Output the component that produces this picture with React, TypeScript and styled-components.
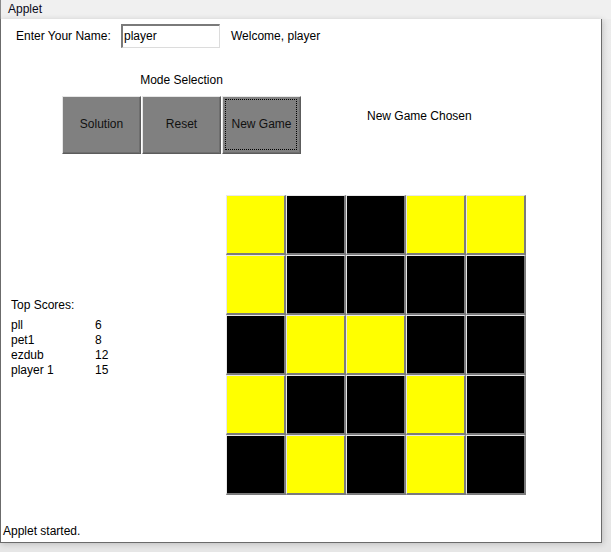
import React from "react";
import styled, { createGlobalStyle } from "styled-components";

const GlobalStyle = createGlobalStyle`
  html, body {
    margin: 0;
    padding: 0;
    background: #e9e9e9;
  }
  body {
    font-family: "Liberation Sans", Arial, sans-serif;
    font-size: 12px;
    color: #000;
  }
  * { box-sizing: border-box; }
`;

const Screen = styled.div`
  width: 611px;
  height: 552px;
  display: flex;
  flex-direction: column;
  overflow: hidden;
  background: linear-gradient(180deg, #ececec 0%, #e6e6e6 100%);
`;

const TitleBar = styled.div`
  height: 19px;
  flex: none;
  background: #f0f0f0;
  padding-left: 7px;
  line-height: 19px;
  font-size: 12px;
  color: #0a0a1a;
  border-left: 1px solid #8a8a8a;
`;

const Frame = styled.div`
  width: 602px;
  height: 524px;
  flex: none;
  background: #ffffff;
  border: 1px solid #6b6b6b;
  border-top: none;
  box-shadow: 1px 1px 6px rgba(0, 0, 0, 0.18);
  display: flex;
  flex-direction: column;
`;

const NameRow = styled.div`
  display: flex;
  align-items: center;
  padding: 5px 0 0 15px;
  height: 29px;
`;

const Label = styled.span<{ $w?: number }>`
  display: inline-block;
  width: ${(p) => (p.$w ? `${p.$w}px` : "auto")};
  line-height: 16px;
  white-space: nowrap;
`;

const TextField = styled.div`
  width: 99px;
  height: 24px;
  border-top: 2px solid #7a7a7a;
  border-left: 2px solid #7a7a7a;
  border-right: 1px solid #dcdcdc;
  border-bottom: 1px solid #dcdcdc;
  padding-left: 1px;
  line-height: 20px;
  margin-right: 11px;
  background: #fff;
`;

const ModeRow = styled.div`
  display: flex;
  align-items: flex-start;
  margin-top: 24px;
  padding-left: 61px;
`;

const ModeGroup = styled.div`
  display: flex;
  flex-direction: column;
  align-items: center;
  gap: 8px;
  width: 239px;
`;

const GroupTitle = styled.div`
  line-height: 16px;
  text-align: center;
`;

const ButtonRow = styled.div`
  display: flex;
  gap: 1px;
`;

const ModeButton = styled.button<{ $focused?: boolean }>`
  position: relative;
  width: 79px;
  height: 58px;
  margin: 0;
  padding: 0 0 3px 0;
  background: #808080;
  border-style: solid;
  border-width: 1px;
  border-color: #e6e6e6 #5c5c5c #5c5c5c #e6e6e6;
  box-shadow: inset -1px -1px 0 #6e6e6e;
  font-family: "Liberation Sans", Arial, sans-serif;
  font-size: 12px;
  color: #111;
  cursor: default;
  &::after {
    content: "";
    display: ${(p) => (p.$focused ? "block" : "none")};
    position: absolute;
    inset: 2px 3px 3px 2px;
    border: 1px dotted #000;
  }
`;

const ChosenText = styled.div`
  margin: 36px 0 0 66px;
  line-height: 16px;
`;

const MainRow = styled.div`
  display: flex;
  align-items: flex-start;
  margin-top: 41px;
`;

const ScoresPanel = styled.div`
  width: 225px;
  padding: 103px 0 0 10px;
  display: flex;
  flex-direction: column;
`;

const ScoresTitle = styled.div`
  line-height: 15px;
  margin-bottom: 5px;
`;

const ScoreLine = styled.div`
  display: grid;
  grid-template-columns: 84px auto;
  line-height: 15px;
`;

const Board = styled.div`
  display: grid;
  grid-template-columns: repeat(5, 60px);
  grid-template-rows: repeat(5, 60px);
`;

const Cell = styled.div<{ $on: boolean }>`
  background: ${(p) => (p.$on ? "#ffff00" : "#000000")};
  border-style: solid;
  border-width: 1px 2px 2px 1px;
  border-color: #e8e8e8 #7b7b7b #7b7b7b #e8e8e8;
`;

const StatusBar = styled.div`
  margin-top: auto;
  padding: 0 0 3px 2px;
  line-height: 16px;
`;

const board: number[][] = [
  [1, 0, 0, 1, 1],
  [1, 0, 0, 0, 0],
  [0, 1, 1, 0, 0],
  [1, 0, 0, 1, 0],
  [0, 1, 0, 1, 0],
];

const scores: [string, number][] = [
  ["pll", 6],
  ["pet1", 8],
  ["ezdub", 12],
  ["player 1", 15],
];

export default function App() {
  return (
    <>
      <GlobalStyle />
      <Screen>
        <TitleBar>Applet</TitleBar>
        <Frame>
          <NameRow>
            <Label $w={105}>Enter Your Name:</Label>
            <TextField>player</TextField>
            <Label>Welcome, player</Label>
          </NameRow>
          <ModeRow>
            <ModeGroup>
              <GroupTitle>Mode Selection</GroupTitle>
              <ButtonRow>
                <ModeButton>Solution</ModeButton>
                <ModeButton>Reset</ModeButton>
                <ModeButton $focused>New Game</ModeButton>
              </ButtonRow>
            </ModeGroup>
            <ChosenText>New Game Chosen</ChosenText>
          </ModeRow>
          <MainRow>
            <ScoresPanel>
              <ScoresTitle>Top Scores:</ScoresTitle>
              {scores.map(([name, score]) => (
                <ScoreLine key={name}>
                  <span>{name}</span>
                  <span>{score}</span>
                </ScoreLine>
              ))}
            </ScoresPanel>
            <Board>
              {board.flatMap((row, r) =>
                row.map((v, c) => <Cell key={`${r}-${c}`} $on={v === 1} />)
              )}
            </Board>
          </MainRow>
          <StatusBar>Applet started.</StatusBar>
        </Frame>
      </Screen>
    </>
  );
}
